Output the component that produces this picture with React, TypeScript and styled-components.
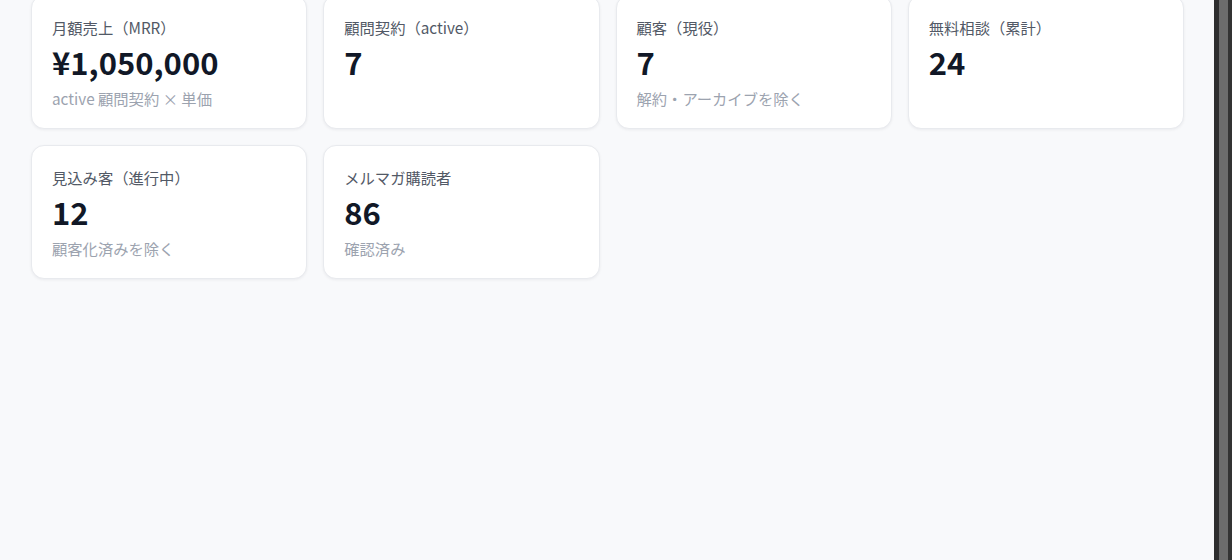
import React from 'react'
import styled, { createGlobalStyle } from 'styled-components'

const GlobalStyle = createGlobalStyle`
  html, body {
    margin: 0;
    padding: 0;
    height: 100%;
    overflow: hidden;
  }
  body {
    font-family: "Noto Sans CJK JP", "Noto Sans", sans-serif;
    background: #f8f9fb;
  }
  #root {
    height: 100%;
  }
`

type Stat = {
  label: string
  value: string
  note?: string
}

const stats: Stat[] = [
  { label: '月額売上（MRR）', value: '¥1,050,000', note: 'active 顧問契約 × 単価' },
  { label: '顧問契約（active）', value: '7' },
  { label: '顧客（現役）', value: '7', note: '解約・アーカイブを除く' },
  { label: '無料相談（累計）', value: '24' },
  { label: '見込み客（進行中）', value: '12', note: '顧客化済みを除く' },
  { label: 'メルマガ購読者', value: '86', note: '確認済み' },
]

export default function App() {
  return (
    <>
      <GlobalStyle />
      <Shell>
        <Main>
          <Grid>
            {stats.map((s) => (
              <Card key={s.label}>
                <Label>{s.label}</Label>
                <Value>{s.value}</Value>
                <Note>{s.note ?? '\u00a0'}</Note>
              </Card>
            ))}
          </Grid>
        </Main>
        <Gutter />
      </Shell>
    </>
  )
}

const Shell = styled.div`
  display: flex;
  height: 100vh;
`

const Main = styled.main`
  flex: 1;
  padding: 0 30px 0 31px;
  background: #f8f9fb;
`

const Grid = styled.div`
  display: grid;
  grid-template-columns: repeat(4, 1fr);
  gap: 16px;
  margin-top: -5px;
`

const Card = styled.div`
  background: #ffffff;
  border: 1px solid #e8eaee;
  border-radius: 13px;
  box-shadow: 0 1px 3px rgba(15, 23, 42, 0.06);
  padding: 20px 20px 19px;
  display: flex;
  flex-direction: column;
`

const Label = styled.div`
  font-size: 15.3px;
  line-height: 22px;
  color: #525966;
`

const Value = styled.div`
  font-size: 31px;
  line-height: 38px;
  font-weight: 700;
  color: #111827;
  margin-top: 5px;
`

const Note = styled.div`
  font-size: 15.3px;
  line-height: 22px;
  color: #9ca3af;
  margin-top: 6px;
`

const Gutter = styled.div`
  width: 9px;
  background: #6c6c6c;
  border-left: 5px solid #2e2e2e;
  border-right: 4px solid #333333;
`
